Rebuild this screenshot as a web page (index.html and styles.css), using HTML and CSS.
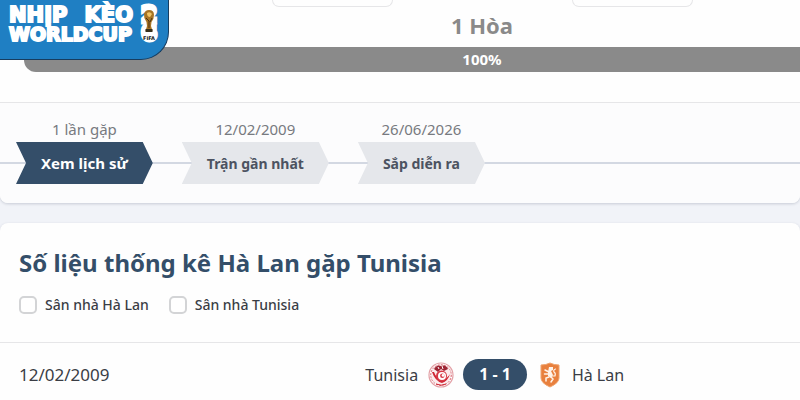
FILE: index.html
```html
<!DOCTYPE html>
<html lang="vi">
<head>
  <meta charset="UTF-8" />
  <title>Hà Lan gặp Tunisia</title>
  <meta name="viewport" content="width=device-width, initial-scale=1.0" />
  <link rel="stylesheet" href="styles.css">
</head>
<body>
  <a class="brand" href="#">
    <span class="brand-name">
      <span class="brand-line brand-top"><span>NHỊP</span> <span>KÈO</span></span>
      <span class="brand-line">WORLDCUP</span>
    </span>
    <span class="brand-year">
      <span>2</span>
      <span>6</span>
      <svg class="trophy" width="14" height="32" viewBox="0 0 14 32" aria-hidden="true">
        <path d="M2 4 Q3 0 7 0 Q12 0 12 5 Q12 9 9.500 12 L9 16 L10.500 21 H3.500 L5 16 L4.500 12 Q1.500 8 2 4Z" fill="#a87424"/>
        <path d="M5 3 Q8 1 10 4 L8 7 Q5 7 5 3Z" fill="#f0c566"/>
        <path d="M4 8 L7 11 L7 18 M10 8 L8 12" stroke="#4b3212" fill="none"/>
        <path d="M3.500 19 H10.500 V22 H3.500Z" fill="#38301c"/>
        <text x="7" y="30" text-anchor="middle">FIFA</text>
      </svg>
    </span>
  </a>

  <section class="card summary">
    <div class="result">
      <div class="teams">
        <div class="team-box"></div>
        <div class="team-box"></div>
      </div>
      <div class="draws">1 Hòa</div>
      <div class="bar">100%</div>
    </div>

    <div class="timeline">
      <div class="step">
        <span>1 lần gặp</span>
        <button class="active">Xem lịch sử</button>
      </div>
      <div class="step">
        <span>12/02/2009</span>
        <button>Trận gần nhất</button>
      </div>
      <div class="step">
        <span>26/06/2026</span>
        <button>Sắp diễn ra</button>
      </div>
    </div>
  </section>

  <section class="card stats">
    <h2>Số liệu thống kê Hà Lan gặp Tunisia</h2>
    <div class="filters">
      <label><input type="checkbox" /> Sân nhà Hà Lan</label>
      <label><input type="checkbox" /> Sân nhà Tunisia</label>
    </div>
    <div class="match">
      <span class="date">12/02/2009</span>
      <span class="home">
        Tunisia
        <svg width="26" height="26" viewBox="0 0 26 26" aria-hidden="true">
          <circle cx="13" cy="13" r="12" fill="#fff" stroke="#e3a0a6" stroke-width="1.200"/>
          <circle cx="13" cy="13" r="10.300" fill="#fbeced" stroke="#dc6a74" stroke-dasharray="2 1.200"/>
          <path d="M6 7 Q9 2 13 4 Q18 2 20 7 L16 9 L13 7 L10 10Z" fill="#9d2534"/>
          <path d="M10 5 l1 2 M14 4 l1 3" stroke="#fff"/>
          <path d="M4 10 Q7 19 14 21 Q20 19 22 12 Q19 17 14 18 Q8 16 6 10Z" fill="#cf2634"/>
          <circle cx="13.500" cy="14" r="5.500" fill="#d73745"/>
          <circle cx="14" cy="14" r="4" fill="#fff"/>
          <circle cx="14.300" cy="13.800" r="2.200" fill="#d73745"/>
          <circle cx="15" cy="13.400" r="1.300" fill="#fff"/>
          <path d="M8 22 Q13 24.500 18 22" stroke="#cf2634" fill="none"/>
        </svg>
      </span>
      <span class="score">1 - 1</span>
      <span class="away">
        <svg width="20" height="26" viewBox="0 0 20 26" aria-hidden="true">
          <path d="M1 3 Q6 3 10 1 Q14 3 19 3 V16 Q19 21 10 25 Q1 21 1 16Z" fill="#e8803e" stroke="#efa36d"/>
          <path d="M9 5 L13 5 L13 8 L11 9 L13 13 L11 16 L8 14 L8 10Z" fill="#fff3e9"/>
          <path d="M9 10 L5 8 M9 12 L4.500 12 M9 15 L6 16 L6 19 M11 15 L13 17 L11 20" fill="none" stroke="#fff3e9" stroke-width="1.500" stroke-linecap="round"/>
          <path d="M12 14 L15 14 Q16 11 14 10 Q13 8 15.500 7" fill="none" stroke="#fff3e9" stroke-width="1.200" stroke-linecap="round"/>
        </svg>
        Hà Lan
      </span>
    </div>
  </section>
</body>
</html>
```

FILE: styles.css
```css
:root {
  --navy: #344e69;
  --gray-bar: #8a8a8a;
  --gray-border: #e6e6e8;
  --page: #f1f3f8;
}

* {
  box-sizing: border-box;
}

body {
  font-family: "Noto Sans", "Open Sans", sans-serif;
  font-size: 16px;
  background-color: var(--page);
  margin: 0;
  color: #3a3d45;
  overflow: hidden;
}

.card {
  background: #fefefe;
  overflow: hidden;
  box-shadow: 0 1px 3px rgba(40, 50, 80, 0.2);
}

/* logo in the corner */
.brand {
  position: absolute;
  top: 0;
  left: 0;
  display: flex;
  gap: 5px;
  padding: 6px 8px 16px 9px;
  background: #1f7fc3;
  border-right: 1px solid #173d60;
  border-bottom: 1px solid #173d60;
  border-radius: 0 0 28px 0;
  color: #fff;
  font-family: "DejaVu Sans", sans-serif;
  font-size: 19px;
  font-weight: 700;
  line-height: 18px;
  text-decoration: none;
  -webkit-text-stroke: 2px #fff;
}

.brand-name,
.brand-year {
  display: flex;
  flex-direction: column;
}

.brand-name {
  width: 124px;
  white-space: nowrap;
}

.brand-line {
  display: flex;
  justify-content: space-between;
}

.brand-top {
  font-size: 21px;
  padding-bottom: 1px;
}

.brand-year {
  position: relative;
  width: 22px;
  align-items: center;
  font-size: 21px;
  -webkit-text-stroke: 5px #fff;
}

.trophy {
  position: absolute;
  top: 4px;
  left: 4px;
  overflow: visible;
}

.trophy text {
  font-size: 5px;
  fill: #111;
  -webkit-text-stroke: 0;
}

/* head to head */
.summary {
  border-radius: 0 0 8px 8px;
  margin-bottom: 20px;
}

.result {
  min-width: 964px;
  padding: 0 24px 30px;
  text-align: center;
}

.teams {
  display: flex;
  justify-content: center;
  gap: 179px;
}

.team-box {
  width: 121px;
  height: 7px;
  border: 1px solid var(--gray-border);
  border-top: none;
  border-radius: 0 0 8px 8px;
}

.draws {
  padding-bottom: 4px;
  color: var(--gray-bar);
  font-size: 22px;
  font-weight: 700;
  line-height: 36px;
}

.bar {
  background: var(--gray-bar);
  border-radius: 12px;
  color: #fff;
  font-size: 15px;
  font-weight: 700;
  line-height: 25px;
}

.timeline {
  display: flex;
  gap: 29px;
  padding: 16px 16px 19px;
  border-top: 1px solid var(--gray-border);
  background: linear-gradient(#d3d8e2, #d3d8e2) 0 59px / 100% 2px no-repeat #fcfcfd;
}

.step {
  display: flex;
  flex-direction: column;
  align-items: center;
  gap: 3px;
  color: #777a80;
  font-size: 15px;
  line-height: 20px;
}

.step button {
  height: 42px;
  padding: 0 25px;
  border: none;
  background: #e5e7eb;
  color: #4c5361;
  font-family: inherit;
  font-size: 14px;
  font-weight: 700;
  white-space: nowrap;
  cursor: pointer;
  clip-path: polygon(0 0, calc(100% - 10px) 0, 100% 50%, calc(100% - 10px) 100%, 0 100%, 10px 50%);
}

.step .active {
  background: var(--navy);
  color: #fff;
  font-size: 15px;
}

/* statistics */
.stats {
  border-radius: 8px 8px 0 0;
  padding-top: 20px;
}

h2 {
  margin: 0;
  padding: 0 19px;
  color: var(--navy);
  font-size: 24px;
  line-height: 40px;
}

.filters {
  display: flex;
  gap: 20px;
  padding: 11px 19px 26px;
  border-bottom: 1px solid var(--gray-border);
  font-size: 14px;
  font-weight: 500;
  line-height: 22px;
}

.filters label {
  display: flex;
  align-items: center;
  gap: 8px;
}

.filters input {
  appearance: none;
  width: 18px;
  height: 18px;
  margin: 0;
  border: 2px solid #d3d4d6;
  border-radius: 5px;
  background: #fff;
}

.match {
  display: grid;
  grid-template-columns: 190px 1fr auto 1fr;
  align-items: center;
  padding: 16px 19px;
}

.date {
  font-size: 17px;
}

.home,
.away {
  display: flex;
  align-items: center;
  gap: 10px;
}

.home {
  justify-content: flex-end;
  padding-right: 9px;
}

.away {
  gap: 12px;
  padding-left: 13px;
}

.score {
  padding: 0 16px;
  border-radius: 16px;
  background: var(--navy);
  color: #fff;
  font-weight: 700;
  line-height: 31px;
}
```
